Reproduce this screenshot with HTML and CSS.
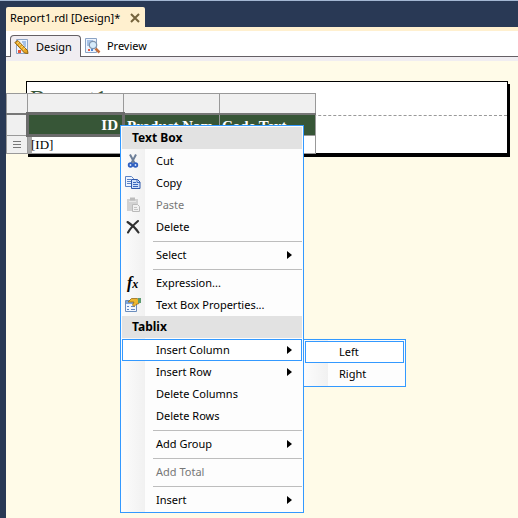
FILE: index.html
```html
<!DOCTYPE html>
<html lang="en">
<head>
<meta charset="utf-8">
<title>Report1.rdl [Design]*</title>
<link rel="stylesheet" href="styles.css">
</head>
<body>
<div class="window">
  <header class="doc-tabs">
    <div class="doc-tab">
      <span>Report1.rdl [Design]*</span>
      <button class="close" aria-label="Close">
        <svg width="10" height="10" viewBox="0 0 10 10"><path d="M1 1l8 8M9 1l-8 8" stroke="#75633d" stroke-width="2" fill="none"/></svg>
      </button>
    </div>
  </header>
  <main class="editor">
    <nav class="view-tabs">
      <button class="view-tab active">
        <svg width="16" height="16" viewBox="0 0 16 16"><path d="M2.500.5h11v14h-11z" fill="#eef4fd" stroke="#8ba3c4"/><path d="M8 3h4M9 5h3M10 7h2" stroke="#5d8fd0"/><path d="M4 11h3v3H4z" fill="#e8543a"/><path d="M11 11h2v2h-2z" fill="#4a86d8"/><path d="M.8 3.500L3.800 1.500 13.500 11.500l.5 3-3.500-.5z" fill="#e9a823" stroke="#8f6414"/><path d="M3 4.500l2-1.500M5 6.500l2-1.500M7 8.500l2-1.500M9 10.500l2-1.500" stroke="#fbe08a"/></svg>
        <span>Design</span>
      </button>
      <button class="view-tab">
        <svg width="16" height="16" viewBox="0 0 16 16"><path d="M.5.5h11v14H.5z" fill="#eef4fd" stroke="#8ba3c4"/><path d="M2 3h6M2 5h3M2 7h2" stroke="#5d8fd0"/><path d="M3 11h2v2H3z" fill="#e8543a"/><path d="M6 11h2v2H6z" fill="#4a86d8"/><path d="M10.500 10.500l4 4" stroke="#c56f3a" stroke-width="2.500"/><circle cx="8" cy="7" r="3.700" fill="#d6ebfb" stroke="#7f94ad" stroke-width="1.300"/></svg>
        <span>Preview</span>
      </button>
    </nav>
    <section class="canvas">
      <div class="report">
        <h1 class="report-title">Report1</h1>
      </div>
      <table class="tablix">
        <tr class="handles"><td class="row-handle"></td><td></td><td></td><td></td></tr>
        <tr class="head"><td class="row-handle"></td><th class="selected">ID</th><th>Product Nam</th><th>Code Text</th></tr>
        <tr class="detail"><td class="row-handle"><svg width="8" height="9" viewBox="0 0 8 9"><path d="M0 1.500h8M0 4.500h8M0 7.500h8" stroke="#777"/></svg></td><td class="field">[ID]</td><td></td><td></td></tr>
      </table>
    </section>
  </main>

  <div class="menu context-menu" role="menu">
    <div class="menu-title">Text Box</div>
    <button class="item" role="menuitem"><svg class="icon" width="16" height="16" viewBox="0 0 16 16"><path d="M5 1.500l4.500 8.500M11 1.500L6.500 10" stroke="#6d7f98" stroke-width="2" fill="none"/><circle cx="5.500" cy="12" r="1.800" fill="#dce8fb" stroke="#2f5fc0" stroke-width="1.800"/><circle cx="10.500" cy="12" r="1.800" fill="#dce8fb" stroke="#2f5fc0" stroke-width="1.800"/></svg>Cut</button>
    <button class="item" role="menuitem"><svg class="icon" width="16" height="16" viewBox="0 0 16 16"><path d="M.5 1.500h6l2 2v8h-8z" fill="#eef4ff" stroke="#5d84c4"/><path d="M2 4.500h4M2 6.500h4M2 8.500h4" stroke="#5d84c4"/><path d="M6.500 4.500h6l2.500 2.500v6.500H6.500z" fill="#cfe0fb" stroke="#2f58ac"/><path d="M12 4.500V7.500h3M8 7.500h3M8 9.500h5M8 11.500h5" stroke="#3c68bd" fill="none"/></svg>Copy</button>
    <button class="item" role="menuitem" disabled><svg class="icon" width="16" height="16" viewBox="0 0 16 16"><path d="M2 2h11v12H2z" fill="#d2d2d2"/><path d="M5 .5h5v3H5z" fill="#bcbcbc"/><path d="M4 4.500h7" stroke="#e8e8e8"/><path d="M7.500 7.500h5l2 2v5h-7z" fill="#f1f1f1" stroke="#bababa"/><path d="M9 10.500h3M9 12.500h4" stroke="#c4c4c4"/></svg>Paste</button>
    <button class="item" role="menuitem"><svg class="icon" width="16" height="16" viewBox="0 0 16 16"><path d="M2.500 3c4 2.500 8 6 11 10.500M13 2C9.500 5 5.500 9 3 13.500" stroke="#303030" stroke-width="2.100" fill="none" stroke-linecap="round"/></svg>Delete</button>
    <hr>
    <button class="item sub" role="menuitem">Select</button>
    <hr>
    <button class="item" role="menuitem"><span class="icon fx">f<small>x</small></span>Expression...</button>
    <button class="item" role="menuitem"><svg class="icon" width="16" height="16" viewBox="0 0 16 16"><path d="M.5 3.500h11v11H.5z" fill="#f2f7ff" stroke="#6b8dbd"/><path d="M1 4h10v3H1z" fill="#7fa6dc"/><path d="M2 9.500h2M2 12.500h2M6 9.500h4M6 12.500h4" stroke="#6288c4"/><path d="M3 5L6.500 1.500h5.500l2 1v4l-3 1-2 2-1.500-1.500L9 5z" fill="#edb72e" stroke="#966c1c" stroke-width=".8"/><path d="M13 1h3v5h-3z" fill="#5d9b70"/></svg>Text Box Properties...</button>
    <div class="menu-title">Tablix</div>
    <button class="item sub highlighted" role="menuitem">Insert Column</button>
    <button class="item sub" role="menuitem">Insert Row</button>
    <button class="item" role="menuitem">Delete Columns</button>
    <button class="item" role="menuitem">Delete Rows</button>
    <hr>
    <button class="item sub" role="menuitem">Add Group</button>
    <hr>
    <button class="item" role="menuitem" disabled>Add Total</button>
    <hr>
    <button class="item sub" role="menuitem">Insert</button>
  </div>
  <div class="menu submenu" role="menu">
    <button class="item highlighted" role="menuitem">Left</button>
    <button class="item" role="menuitem">Right</button>
  </div>
</div>
</body>
</html>
```
FILE: styles.css
```css
* { box-sizing: border-box; }
body {
  margin: 0;
  font: 11px/16px "Noto Sans", "Open Sans", sans-serif;
  color: #000;
}
button {
  font: inherit;
  color: inherit;
  background: none;
  border: 0;
  padding: 0;
  text-align: left;
}
.window {
  position: relative;
  display: flex;
  flex-direction: column;
  min-height: 100vh;
  overflow: hidden;
  padding-left: 6px;
  border-top: 1px solid #a3b7d2;
  background: #293955;
}
.doc-tabs { padding-top: 6px; }
.doc-tab {
  display: inline-flex;
  align-items: center;
  gap: 10px;
  height: 20px;
  padding: 2px 5px 0 4px;
  background: #fff0cf;
  border-radius: 2px 2px 0 0;
  vertical-align: top;
}
.close { display: flex; }
.editor {
  flex: 1;
  display: flex;
  flex-direction: column;
  border-top: 4px solid #fff0cf;
  background: #fff;
}
.view-tabs {
  display: flex;
  align-items: flex-end;
  height: 30px;
  padding-left: 4px;
  background: linear-gradient(#fff 25px, #656065 25px, #656065 26px, #f0edf1 26px);
}
.view-tab {
  display: flex;
  align-items: center;
  gap: 6px;
  height: 22px;
  margin-bottom: 4px;
  padding: 0 8px 0 4px;
}
.view-tab.active {
  border: 1px solid #656065;
  border-bottom: 0;
  border-radius: 4px 4px 0 0;
  background: #f0edf1;
  padding: 0 8px 0 3px;
}
.canvas {
  flex: 1;
  position: relative;
  padding: 20px 10px 0 20px;
  background: #fffbe8;
}
.report {
  height: 73px;
  padding: 2px 3px;
  border: 1px solid #000;
  background: #fff;
  box-shadow: 2px 3px 0 #000;
  position: relative;
}
.report::after {
  content: "";
  position: absolute;
  top: 33px;
  left: 0;
  right: 0;
  border-top: 1px dashed #999;
}
.report-title {
  margin: 0;
  font: 24px/28px "Liberation Serif", serif;
  color: #375637;
}
.tablix {
  position: absolute;
  top: 32px;
  left: 0;
  table-layout: fixed;
  border-collapse: collapse;
  width: 310px;
  font-family: "Liberation Serif", serif;
}
.tablix td, .tablix th { padding: 0 2px; border: 1px solid #999; }
.tablix .row-handle { width: 21px; text-align: center; background: #f0f0f0; }
.handles td { height: 20px; background: #f0f0f0; }
.handles { border-bottom: 2px solid #777; }
.tablix .head th {
  height: 22px;
  padding-top: 2px;
  font-size: 15px;
  line-height: 16px;
  text-align: left;
  white-space: nowrap;
  color: #fff;
  background: #375637;
}
.tablix .head .selected {
  padding: 0 4px 0 0;
  text-align: right;
  border: 3px solid #6b6b6b;
}
.detail td { height: 18px; background: #fff; line-height: 14px; }
.tablix .field { padding-left: 3px; font-size: 13px; box-shadow: inset 4px 0 #a8a8a8; }
.row-handle svg { display: block; margin: auto; }
.menu {
  position: absolute;
  border: 1px solid #3399ff;
  background: linear-gradient(90deg, #fcfcfc, #f1f1f1 24px, #fdfdfd 24px);
}
.context-menu { top: 124px; left: 120px; width: 184px; padding: 1px; }
.submenu { top: 338px; left: 303px; width: 103px; padding: 1px; }
.menu-title {
  height: 22px;
  margin-bottom: 1px;
  padding-left: 10px;
  line-height: 22px;
  font-size: 12px;
  font-weight: bold;
  background: #e2e2e2;
}
.item {
  position: relative;
  display: flex;
  align-items: center;
  width: 100%;
  height: 22px;
  padding-left: 34px;
  white-space: nowrap;
}
.item:disabled { color: #777; }
.item.highlighted { background: #fff; outline: 1px solid #3399ff; outline-offset: -1px; }
.sub::after {
  content: "";
  position: absolute;
  right: 10px;
  border: 4px solid transparent;
  border-left: 5px solid #000;
  border-right: 0;
}
.icon { position: absolute; left: 3px; }
.fx { font: italic bold 16px/16px "Liberation Serif", serif; padding-left: 2px; }
.fx small { font-size: 12px; }
hr { height: 1px; margin: 3px 0 2px 31px; border: 0; background: #bdbdbd; }
```
